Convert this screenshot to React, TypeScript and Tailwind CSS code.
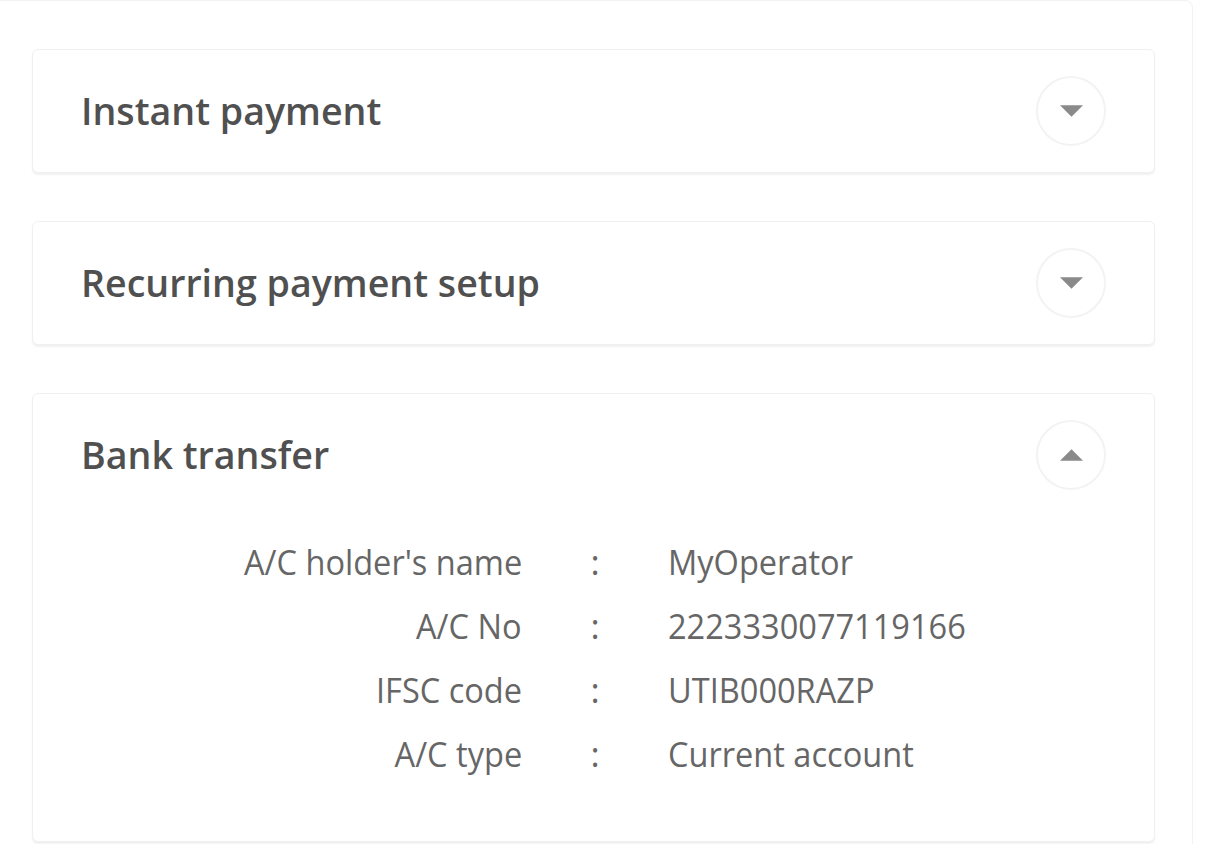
import React, { useState } from 'react';

type Section = {
  title: string;
  rows?: { label: string; value: string }[];
};

const sections: Section[] = [
  { title: 'Instant payment' },
  { title: 'Recurring payment setup' },
  {
    title: 'Bank transfer',
    rows: [
      { label: "A/C holder's name", value: 'MyOperator' },
      { label: 'A/C No', value: '2223330077119166' },
      { label: 'IFSC code', value: 'UTIB000RAZP' },
      { label: 'A/C type', value: 'Current account' },
    ],
  },
];

const Caret: React.FC<{ up: boolean }> = ({ up }) => (
  <svg width="23" height="12" viewBox="0 0 24 12" fill="#8a8a8a">
    {up ? <polygon points="12,0 24,12 0,12" /> : <polygon points="0,0 24,0 12,12" />}
  </svg>
);

const PaymentCard: React.FC<{ section: Section; defaultOpen: boolean }> = ({ section, defaultOpen }) => {
  const [open, setOpen] = useState(defaultOpen);

  return (
    <div className="bg-white border border-[#f0f0f0] rounded-md shadow-[0_2px_2px_rgba(0,0,0,0.06)]">
      <div className="h-[122px] flex items-center justify-between pl-12 pr-12">
        <h3 className="text-[37.6px] font-semibold text-[#505050]">{section.title}</h3>
        <button
          className="w-[70px] h-[70px] rounded-full border-2 border-[#f3f3f3] flex items-center justify-center"
          onClick={() => setOpen(!open)}
          aria-label="Toggle section"
        >
          <Caret up={open} />
        </button>
      </div>

      {open && section.rows && (
        <div className="pt-[14px] pb-[55px] text-[35px] text-[#666666]">
          {section.rows.map((row) => (
            <div key={row.label} className="h-16 flex items-center">
              <div className="w-[489px] text-right">
                <span className="inline-block scale-x-[0.93] origin-right">{row.label}</span>
              </div>
              <div className="w-[146px] text-center">:</div>
              <div>
                <span className="inline-block scale-x-[0.93] origin-left">{row.value}</span>
              </div>
            </div>
          ))}
        </div>
      )}
    </div>
  );
};

export default function App() {
  return (
    <div className="w-[1216px] h-[844px] overflow-hidden bg-white font-['Open_Sans',sans-serif]">
      <div className="w-[1193px] h-[860px] border-t border-r border-[#f2f2f2] rounded-tr-lg pt-12 pl-8 pr-[37px] flex flex-col gap-[48px]">
        {sections.map((s, i) => (
          <PaymentCard key={s.title} section={s} defaultOpen={i === 2} />
        ))}
      </div>
    </div>
  );
}
